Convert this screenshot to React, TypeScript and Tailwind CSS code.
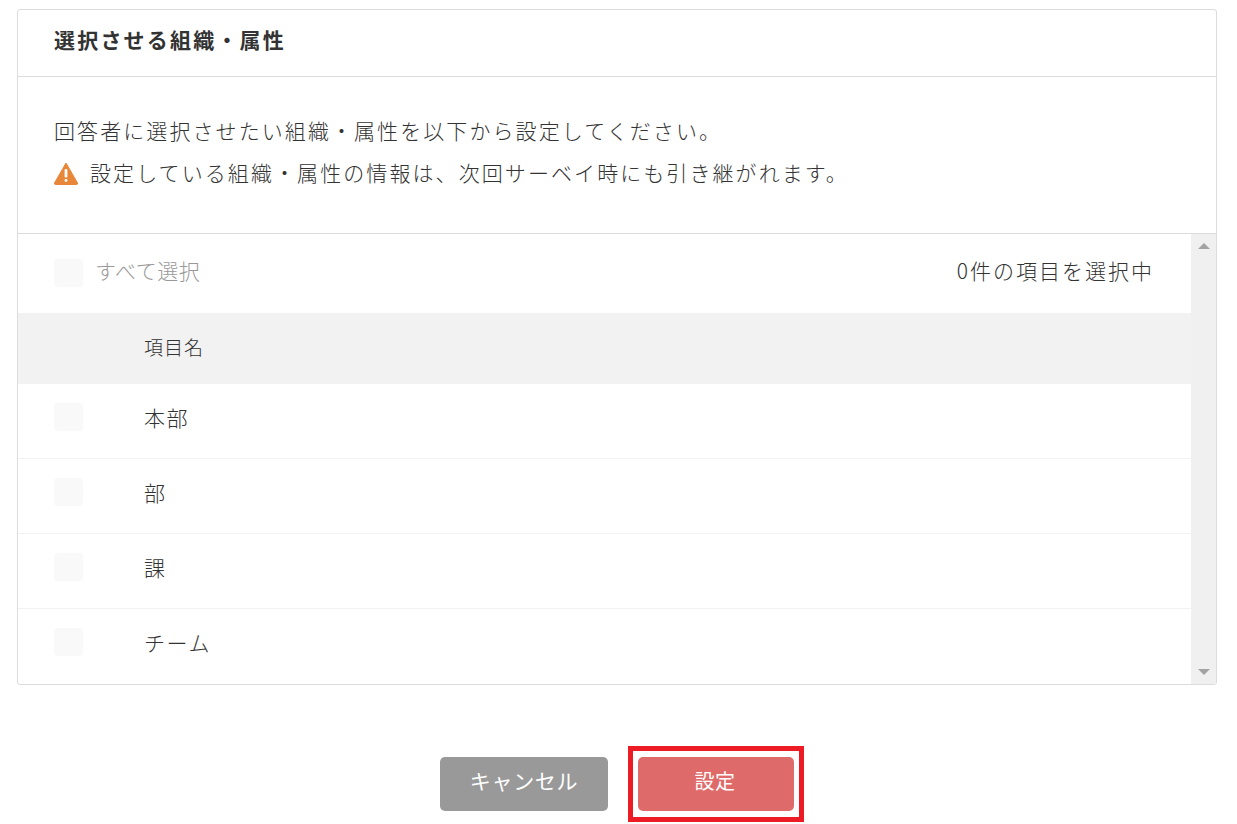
const font = { fontFamily: '"Noto Sans CJK JP", "Noto Sans", sans-serif' }

const items = ["本部", "部", "課", "チーム"]

function Box() {
  return <span className="block w-[29px] h-[28px] rounded-sm bg-[#f9f9f9]"></span>
}

function WarnIcon() {
  return (
    <svg width="24" height="23" viewBox="0 0 24 23" className="shrink-0 mt-[3px]">
      <path d="M12 1 L23.5 21 Q23.8 22.5 22.5 22.5 L1.5 22.5 Q0.2 22.5 0.5 21 Z" fill="#e8873a" stroke="#e8873a" strokeLinejoin="round" />
      <rect x="10.6" y="7" width="2.8" height="8.5" rx="1" fill="#fff" />
      <rect x="10.6" y="17" width="2.8" height="2.8" rx="1" fill="#fff" />
    </svg>
  )
}

export default function App() {
  return (
    <div style={font} className="w-[1237px] h-[824px] bg-white text-[#333] overflow-hidden pt-[9px] pl-[17px]">
      <div className="w-[1200px] border border-[#dcdcdc] rounded-[3px]">
        <div className="h-[67px] border-b border-[#dcdcdc] pl-[36px] flex items-center">
          <h1 className="text-[21px] font-bold tracking-[2.2px] leading-none text-[#333] -mt-[8px]">選択させる組織・属性</h1>
        </div>

        <div className="h-[157px] border-b border-[#dcdcdc] pl-[36px] pt-[32px]">
          <p className="text-[21px] tracking-[2.08px] leading-[42px] font-light h-[42px]">回答者に選択させたい組織・属性を以下から設定してください。</p>
          <p className="text-[21px] tracking-[2.08px] leading-[42px] font-light h-[42px] flex items-center gap-[12px]">
            <WarnIcon />
            <span>設定している組織・属性の情報は、次回サーベイ時にも引き継がれます。</span>
          </p>
        </div>

        <div className="flex h-[450px]">
          <div className="flex-1">
            <div className="h-[79px] flex items-center justify-between pl-[36px] pr-[37px]">
              <label className="flex items-center gap-[12px] -mt-[2px]">
                <Box />
                <span className="text-[21px] tracking-[0.5px] font-light text-[#999] -mt-[3px]">すべて選択</span>
              </label>
              <span className="text-[21px] tracking-[2px] font-light -mt-[5px]">0件の項目を選択中</span>
            </div>
            <div className="h-[71px] bg-[#f2f2f2] flex items-center pl-[126px]">
              <span className="text-[19px] tracking-[1px] font-light -mt-[3px]">項目名</span>
            </div>
            {items.map((item, i) => (
              <div key={item} className={"h-[75px] flex pl-[36px] " + (i < items.length - 1 ? "border-b border-[#f2f2f2]" : "")}>
                <div className="pt-[19px] w-[90px]">
                  <Box />
                </div>
                <span className="text-[21px] tracking-[1.6px] font-light leading-[66px]">{item}</span>
              </div>
            ))}
          </div>

          <div className="w-[25px] bg-[#f0f0f0] flex flex-col items-center justify-between py-[9px]">
            <span className="w-0 h-0 border-x-[6px] border-x-transparent border-b-[6px] border-b-[#a3a3a3]"></span>
            <span className="w-0 h-0 border-x-[6px] border-x-transparent border-t-[6px] border-t-[#a3a3a3]"></span>
          </div>
        </div>
      </div>

      <div className="w-[1200px] flex justify-center gap-[30px] mt-[72px]">
        <button className="w-[168px] h-[54px] rounded-[5px] bg-[#999] text-white text-[21px] tracking-[0.7px] font-normal pb-[6px]">キャンセル</button>
        <div className="relative">
          <button className="w-[156px] h-[54px] rounded-[5px] bg-[#df6a6a] text-white text-[20px] tracking-[0.5px] font-normal pb-[7px] pr-[2px]">設定</button>
          <span className="absolute -inset-x-[10px] -inset-y-[11px] border-[5px] border-[#ed1c24]"></span>
        </div>
      </div>
    </div>
  )
}
